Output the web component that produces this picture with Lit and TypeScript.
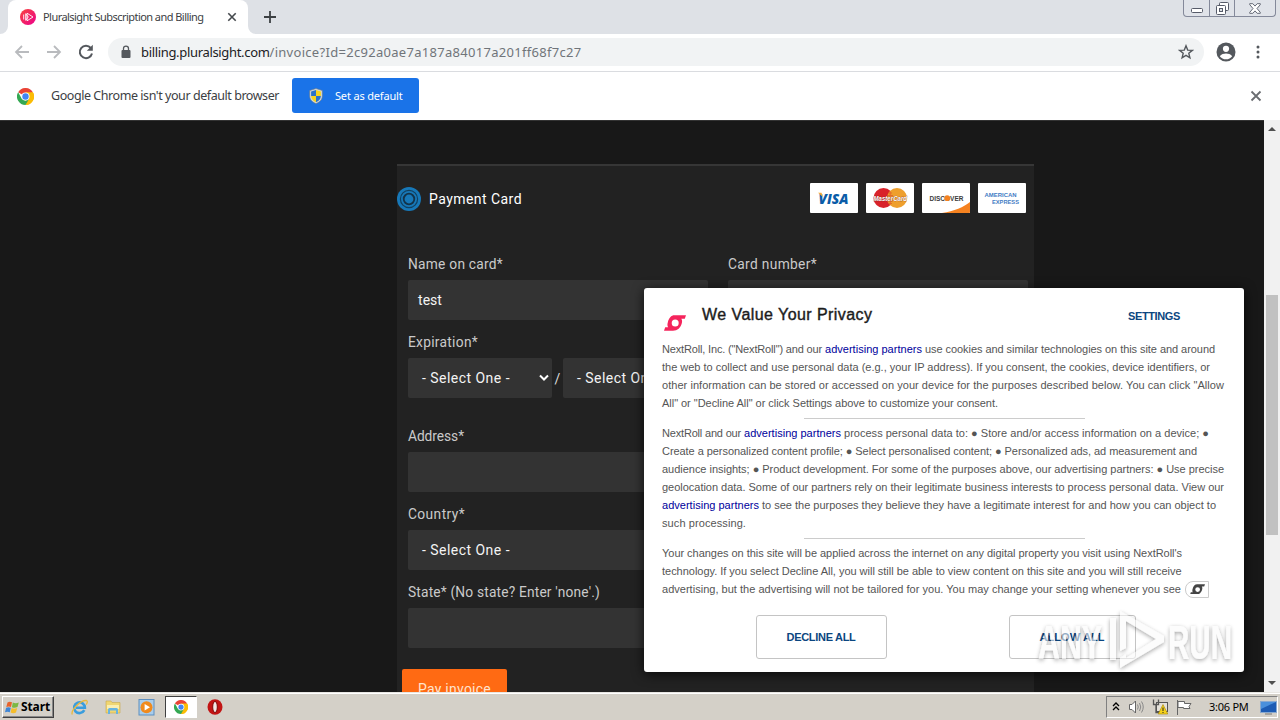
import { LitElement, html, css, svg } from "lit";
import { customElement, property } from "lit/decorators.js";

/** One line of text whose letter spacing is adjusted so it spans `span` pixels. */
@customElement("fit-text")
class FitText extends LitElement {
  @property({ type: Number }) span = 0;
  static styles = css`
    :host { display: inline-block; white-space: nowrap; flex: none; }
  `;
  render() {
    return html`<span><slot></slot></span>`;
  }
  firstUpdated() {
    const el = this.renderRoot.querySelector("span") as HTMLElement;
    const count = (this.textContent || "").trim().replace(/\s+/g, " ").length;
    const natural = el.getBoundingClientRect().width;
    if (count && this.span) {
      this.style.letterSpacing = `${(this.span - natural) / count}px`;
      this.style.width = `${this.span}px`;
    }
  }
}

const chromeLogo = (size: number) => html`<svg width=${size} height=${size} viewBox="0 0 48 48">
  <path fill="#ea4335" d="M24 24 3.2 12A24 24 0 0 1 44.8 12Z"/>
  <path fill="#fbbc05" d="M24 24 44.8 12A24 24 0 0 1 24 48Z"/>
  <path fill="#fbbc05" d="M24 12H44.8A24 24 0 0 1 24 48L34.4 30Z"/>
  <path fill="#34a853" d="M24 48A24 24 0 0 1 3.2 12L13.6 30 24 36 34.4 30Z"/>
  <circle cx="24" cy="24" r="11.5" fill="#fff"/>
  <circle cx="24" cy="24" r="9" fill="#4285f4"/>
</svg>`;

const rollMark = (w: number, color: string) => html`<svg width=${w} height=${(w * 16) / 22} viewBox="0 0 22 16">
  <path fill=${color} fill-rule="evenodd" d="M10.5 0.3H22L20.8 3.8H17.3C18.3 5.2 18.2 6.6 17.8 8.2 16.8 12.6 13.4 15.7 9 15.7H0L1.2 12.2H4.2C3.2 10.9 3.3 9.2 3.8 7.4 4.8 3 7.2 0.3 10.5 0.3ZM11.2 4.6A3.5 3.5 0 1 0 11.2 11.6 3.5 3.5 0 1 0 11.2 4.6Z"/>
</svg>`;

const shield = html`<svg width="16" height="16" viewBox="0 0 16 16">
  <path d="M8 .5 14.3 2.6V8C14.3 11.8 11.5 14.2 8 15.6 4.5 14.2 1.7 11.8 1.7 8V2.6Z" fill="#d5dbe0" stroke="#6d7880" stroke-width=".6"/>
  <path d="M8 2V8H3.1V3.6Z" fill="#2b72c9"/><path d="M8 2V8H12.9V3.6Z" fill="#f7d31e"/>
  <path d="M8 8V14.2C5.4 13.1 3.3 11.2 3.1 8Z" fill="#f7d31e"/><path d="M8 8V14.2C10.6 13.1 12.7 11.2 12.9 8Z" fill="#2b72c9"/>
</svg>`;

@customElement("app-root")
class AppRoot extends LitElement {
  static styles = css`
    :host {
      display: grid; grid-template-rows: 34px 38px 48px 572px 28px;
      width: 1280px; height: 720px; overflow: hidden; position: relative;
      font-family: "Noto Sans", "DejaVu Sans", sans-serif;
    }
    * { box-sizing: border-box; }
    svg { display: block; flex: none; }

    .tabs { background: #dee1e6; display: flex; align-items: stretch; }
    .edge { align-self: flex-end; }
    .tab { width: 240px; background: #fff; border-radius: 8px 8px 0 0; display: flex; align-items: center; padding: 0 11px 0 12px; font-size: 11px; color: #3c4043; }
    .tab fit-text { margin: -1px 0 0 7px; }
    .tab .x { margin-left: auto; }
    .plus { align-self: center; margin-left: 8px; }
    .wincontrols { margin-left: auto; margin-right: 4px; height: 17px; display: flex; border: 1px solid #84899a; border-top: 0; border-radius: 0 0 4px 4px; background: #e0e3e9; }
    .wincontrols div { display: flex; align-items: center; justify-content: center; border-left: 1px solid #84899a; width: 25px; }
    .wincontrols div:first-child { border-left: 0; width: 25px; }
    .wincontrols div:last-child { width: 41px; }

    .toolbar { background: #fff; border-bottom: 1px solid #dadce0; display: flex; align-items: center; padding: 0 0 1px 14px; }
    .toolbar > svg + svg { margin-left: 16px; }
    .omnibox { margin-left: 14px; width: 1096px; height: 28px; border-radius: 14px; background: #f1f3f4; display: flex; align-items: center; padding: 0 10px 0 12px; font-size: 13px; color: #202124; }
    .omnibox .lock { margin-right: 9px; }
    .omnibox fit-text { margin-top: -1px; }
    .omnibox .path { color: #70757a; }
    .omnibox .star { margin-left: auto; }
    .toolbar .avatar { margin-left: 12px; }
    .toolbar .more { margin-left: 19px; }

    .infobar { background: #fff; display: flex; align-items: center; padding: 0 18px 0 17px; color: #3c4043; font-size: 12.5px; }
    .infobar .msg { margin: -1px 0 0 17px; }
    .default { margin: -1px 0 0 13px; width: 127px; height: 35px; border-radius: 3px; background: #1a73e8; color: #fff; display: flex; align-items: center; padding-left: 16px; gap: 11px; font-size: 11px; }
    .default fit-text { margin-top: -1px; }
    .infobar .close { margin-left: auto; }

    .page { background: #181818; display: grid; grid-template-columns: 1264px 16px; overflow: hidden; font-family: Roboto, "Liberation Sans", sans-serif; }
    .body { padding: 44px 0 0 397px; height: 572px; overflow: hidden; box-shadow: inset 0 1px #333; }
    .panel { width: 637px; height: 560px; background: #222; border-top: 2px solid #363636; }
    .method { display: flex; height: 65px; align-items: center; padding-right: 8px; color: #fff; font-size: 14px; }
    .method fit-text { margin: 0 0 0 8px; }
    .cards { margin-left: auto; display: flex; gap: 8px; }
    .card { width: 48px; height: 30px; background: #fff; border-radius: 1px; margin-top: -1px; }
    .cols { display: grid; grid-template-columns: 300px 300px; gap: 20px; padding: 17px 0 0 11px; }
    .label { height: 32px; line-height: 33px; font-size: 13.75px; color: #cacaca; }
    .input { height: 40px; background: #333; border-radius: 2px; color: #f4f4f4; font-size: 14px; display: flex; align-items: center; padding: 0 10px; margin-bottom: 6px; }
    .select { padding: 0 3px 0 14px; justify-content: space-between; }
    .exp { display: flex; color: #ddd; font-size: 14px; margin-bottom: 16px; }
    .exp .input { width: 144px; }
    .exp .slash { width: 11px; text-align: center; line-height: 43px; }
    .pay { margin: 15px 0 0 5px; width: 105px; height: 40px; border-radius: 2px; background: #ff6a13; color: #ffe3cd; font-size: 14px; display: flex; align-items: center; justify-content: center; }

    .scroll { background: #f1f1f1; display: flex; flex-direction: column; align-items: center; }
    .thumb { width: 12px; height: 240px; background: #c1c1c1; margin-top: 164px; }
    .scroll .up { margin-top: 7px; }
    .scroll .down { margin-top: auto; margin-bottom: 7px; }

    .modal { position: absolute; left: 644px; top: 288px; width: 600px; height: 384px; background: #fff; border-radius: 3px; box-shadow: 0 2px 12px rgba(0,0,0,.75); padding: 0 18px; font-family: "Liberation Sans", Arial, sans-serif; font-size: 11px; line-height: 18px; color: #555; }
    .head { height: 52px; display: flex; align-items: flex-start; }
    .head svg { margin: 27px 0 0 2px; }
    .title { margin: 18px 0 0 16px; font-size: 16px; color: #1c1c1c; -webkit-text-stroke: .4px #1c1c1c; }
    .settings { margin: 19px 46px 0 auto; font-weight: bold; color: #0b4680; }
    .para { display: flex; flex-direction: column; align-items: flex-start; }
    .parts { display: flex; }
    .rule { width: 281px; height: 1px; background: #ccc; margin: 6px auto 5px; }
    .last { display: flex; align-items: center; }
    .badge { width: 24px; height: 17px; border: 1px solid #ccc; border-radius: 8px 0 0 8px; margin-left: 4px; display: flex; align-items: center; justify-content: center; }
    .link { color: #00009c; }
    .gap { margin-left: 3px; }
    .actions { display: flex; gap: 122px; padding: 17px 0 0 94px; }
    .btn { height: 44px; width: 131px; border: 1px solid #c4c4c4; border-radius: 3px; display: flex; align-items: center; justify-content: center; font-weight: bold; color: #0b4680; padding-right: 1px; }
    .btn.allow { width: 127px; }
    .watermark { position: absolute; left: 1030px; top: 604px; overflow: visible; }
    .wm { font: bold 48px "Liberation Sans", sans-serif; }

    .taskbar { background: #d4d0c8; border-top: 1px solid #e8e6e2; box-shadow: inset 0 1px #fff; display: flex; align-items: center; padding: 2px 2px 1px; }
    .start { width: 52px; height: 22px; border: 1px solid; border-color: #fff #404040 #404040 #fff; box-shadow: inset -1px -1px #888; display: flex; align-items: center; padding-left: 2px; font-size: 12px; font-weight: bold; color: #000; }
    .start fit-text { margin: -1px 0 0 1px; }
    .launch { display: flex; align-items: center; margin-left: 17px; }
    .launch > * { margin-right: 17px; }
    .launch .active { width: 32px; height: 22px; background: #fff; border: 1px solid; border-color: #404040 #fff #fff #404040; display: flex; align-items: center; justify-content: center; margin: 0 10px 0 -8px; }
    .tray { margin-left: auto; width: 172px; height: 22px; border: 1px solid; border-color: #808080 #fff #fff #808080; display: flex; align-items: center; padding: 0 2px 0 5px; font-size: 11px; color: #000; }
    .tray .clock { margin: -1px 11px 0 16px; }
  `;

  private caret = html`<svg width="10" height="8" viewBox="0 0 10 8"><path d="M1 1.5 5 5.5 9 1.5" fill="none" stroke="#fff" stroke-width="2"/></svg>`;

  render() {
    return html`
      <div class="tabs">
        <svg class="edge" width="8" height="8"><path d="M8 0V8H0A8 8 0 0 0 8 0Z" fill="#fff"/></svg>
        <div class="tab">
          <svg width="16" height="16" viewBox="0 0 16 16">
            <defs><linearGradient id="ps" x1="0" y1="0" x2="1" y2="1"><stop offset="0" stop-color="#f8463c"/><stop offset="1" stop-color="#ec008c"/></linearGradient></defs>
            <circle cx="8" cy="8" r="8" fill="url(#ps)"/>
            <path d="M3.7 5.5V10.5M5.7 4.7V11.3L8.3 8ZM7 4.2 13 8 7 11.8Z" fill="none" stroke="#fff" stroke-width=".9"/>
          </svg>
          <fit-text span="160.5">Pluralsight Subscription and Billing</fit-text>
          <svg class="x" width="10" height="10" viewBox="0 0 10 10"><path d="M1.3 1.3 8.7 8.7M8.7 1.3 1.3 8.7" stroke="#45494d" stroke-width="1.6"/></svg>
        </div>
        <svg class="edge" width="8" height="8"><path d="M0 0V8H8A8 8 0 0 1 0 0Z" fill="#fff"/></svg>
        <svg class="plus" width="12" height="12" viewBox="0 0 12 12"><path d="M6 0V12M0 6H12" stroke="#3c4043" stroke-width="1.8"/></svg>
        <div class="wincontrols">
          <div><svg width="12" height="13" viewBox="0 0 12 13"><rect x=".5" y="6.5" width="11" height="4" rx="1" fill="#fff" stroke="#565b69"/></svg></div>
          <div><svg width="13" height="13" viewBox="0 0 13 13"><rect x="3.5" y=".5" width="9" height="8" rx="1" fill="#fff" stroke="#565b69"/><rect x=".5" y="3.5" width="9" height="9" rx="1" fill="#fff" stroke="#565b69"/><rect x="3.5" y="6.5" width="3" height="3" fill="#dee1e6" stroke="#565b69"/></svg></div>
          <div><svg width="12" height="11" viewBox="0 0 12 11"><path d="M.7.7H3.8L6 3.1 8.2.7H11.3V1.6L8 5.5 11.3 9.4V10.3H8.2L6 7.9 3.8 10.3H.7V9.4L4 5.5.7 1.6Z" fill="#fff" stroke="#565b69" stroke-width=".9"/></svg></div>
        </div>
      </div>

      <div class="toolbar">
        <svg width="16" height="16" viewBox="0 0 16 16"><path d="M15 8H2.5M8 2 2 8 8 14" fill="none" stroke="#b9bbbe" stroke-width="1.8"/></svg>
        <svg width="16" height="16" viewBox="0 0 16 16"><path d="M1 8H13.5M8 2 14 8 8 14" fill="none" stroke="#b9bbbe" stroke-width="1.8"/></svg>
        <svg width="16" height="16" viewBox="0 0 16 16"><path d="M12.8 4A6.2 6.2 0 1 0 14 9.5" fill="none" stroke="#54585d" stroke-width="2"/><path d="M14.8.8V6.8H8.8Z" fill="#54585d"/></svg>
        <div class="omnibox">
          <svg class="lock" width="12" height="14" viewBox="0 0 12 14"><rect x="1.5" y="5" width="9" height="8" rx="1" fill="#54585d"/><path d="M3.5 6V3.6A2.5 2.5 0 0 1 8.5 3.6V6" fill="none" stroke="#54585d" stroke-width="1.3"/></svg>
          <fit-text span="128.5">billing.pluralsight.com</fit-text><fit-text span="312" class="path">/invoice?Id=2c92a0ae7a187a84017a201ff68f7c27</fit-text>
          <svg class="star" width="16" height="16" viewBox="0 0 16 16"><path d="M8 1.8 9.7 6.1 14.3 6.4 10.8 9.3 11.9 13.8 8 11.3 4.1 13.8 5.2 9.3 1.7 6.4 6.3 6.1Z" fill="none" stroke="#54585d" stroke-width="1.4"/></svg>
        </div>
        <svg class="avatar" width="20" height="20" viewBox="0 0 20 20"><circle cx="10" cy="10" r="9.5" fill="#54585d"/><circle cx="10" cy="6.8" r="3.1" fill="#fff"/><path d="M3.8 14.2C5 12 8 11.4 10 11.4S15 12 16.2 14.2C14.8 16.3 12.5 17.3 10 17.3S5.2 16.3 3.8 14.2Z" fill="#fff"/></svg>
        <svg class="more" width="6" height="14" viewBox="0 0 6 14"><circle cx="3" cy="2" r="1.5" fill="#54585d"/><circle cx="3" cy="7" r="1.5" fill="#54585d"/><circle cx="3" cy="12" r="1.5" fill="#54585d"/></svg>
      </div>

      <div class="infobar">
        ${chromeLogo(17)}
        <fit-text class="msg" span="228">Google Chrome isn't your default browser</fit-text>
        <div class="default">${shield}<fit-text span="67.5">Set as default</fit-text></div>
        <svg class="close" width="12" height="12" viewBox="0 0 12 12"><path d="M1.5 1.5 10.5 10.5M10.5 1.5 1.5 10.5" stroke="#6a6d71" stroke-width="1.8"/></svg>
      </div>

      <div class="page">
        <div class="body">
          <div class="panel">
            <div class="method">
              <svg width="24" height="24" viewBox="0 0 24 24"><circle cx="12" cy="12" r="12" fill="#1778b8"/><circle cx="12" cy="12" r="8.6" fill="none" stroke="#12405f" stroke-width="1.2"/><circle cx="12" cy="12" r="5.3" fill="none" stroke="#12334a" stroke-width="1.8"/></svg>
              <fit-text span="93">Payment Card</fit-text>
              <div class="cards">${this.cards()}</div>
            </div>
            <div class="cols">
              <div>
                <div class="label"><fit-text span="95">Name on card*</fit-text></div>
                <div class="input"><fit-text span="24">test</fit-text></div>
                <div class="label"><fit-text span="70">Expiration*</fit-text></div>
                <div class="exp">
                  <div class="input select"><fit-text span="88">- Select One -</fit-text>${this.caret}</div>
                  <div class="slash">/</div>
                  <div class="input select"><fit-text span="88">- Select One -</fit-text>${this.caret}</div>
                </div>
                <div class="label"><fit-text span="56">Address*</fit-text></div>
                <div class="input"></div>
                <div class="label"><fit-text span="57">Country*</fit-text></div>
                <div class="input select"><fit-text span="88">- Select One -</fit-text></div>
                <div class="label"><fit-text span="192">State* (No state? Enter 'none'.)</fit-text></div>
                <div class="input"></div>
              </div>
              <div>
                <div class="label"><fit-text span="89">Card number*</fit-text></div>
                <div class="input"></div>
              </div>
            </div>
            <div class="pay"><fit-text span="73">Pay invoice</fit-text></div>
          </div>
        </div>
        <div class="scroll">
          <svg class="up" width="8" height="4"><path d="M0 4 4 0 8 4Z" fill="#505050"/></svg>
          <div class="thumb"></div>
          <svg class="down" width="8" height="4"><path d="M0 0 4 4 8 0Z" fill="#505050"/></svg>
        </div>
      </div>

      <div class="taskbar">
        <div class="start">
          <svg width="15" height="15" viewBox="0 0 15 15"><path d="M2.5 2.5C4 1.3 5.5 1.5 7 2.3L6 7C4.5 6.2 3 6.2 1.3 7Z" fill="#e8632b"/><path d="M7.8 2.6C9.5 3.4 11.5 3.6 13.8 2.6L12.5 7C10.5 8 8.7 7.9 6.9 7.2Z" fill="#7cb843"/><path d="M1.1 7.8C2.6 7 4.3 7 5.8 7.8L4.8 12.3C3.2 11.5 1.7 11.6 0 12.3Z" fill="#3f86d6"/><path d="M6.6 8C8.5 8.9 10.2 8.9 12.2 8L11 12.6C9 13.5 7.2 13.3 5.6 12.6Z" fill="#f5bd2a"/></svg>
          <fit-text span="29">Start</fit-text>
        </div>
        <div class="launch">
          <svg width="17" height="17" viewBox="0 0 17 17"><path d="M13.3 11.2A5.4 5.4 0 1 1 13.9 8.8H5" fill="none" stroke="#3a9ddd" stroke-width="2.6"/><path d="M1.3 15.5C-.5 12 9 1 15.5 1.5 17 2 16 4.5 15.2 5.5" fill="none" stroke="#e9b93c" stroke-width="1.3"/></svg>
          <svg width="16" height="16" viewBox="0 0 16 16"><path d="M1 2H6L7 3.5H15V14H1Z" fill="#f0d672" stroke="#c9a94b" stroke-width=".6"/><path d="M2 6H14V10H2Z" fill="#fbeeb0"/><path d="M3 15V10.5A1.5 1.5 0 0 1 4.5 9H11.5A1.5 1.5 0 0 1 13 10.5V15H11V11.5H5V15Z" fill="#68b4df"/></svg>
          <svg width="18" height="17" viewBox="0 0 18 17"><rect x="1" y=".5" width="15" height="15.5" fill="#a9cdeb" stroke="#5d8fc0"/><circle cx="8.5" cy="8.2" r="6" fill="#f08a1d"/><path d="M6.6 4.9 12 8.2 6.6 11.5Z" fill="#fff"/></svg>
          <div class="active">${chromeLogo(14)}</div>
          <svg width="16" height="16" viewBox="0 0 16 16"><ellipse cx="8" cy="8" rx="7.5" ry="7.8" fill="#c21414"/><ellipse cx="8" cy="8" rx="2.3" ry="5.6" fill="#f3e9e6" stroke="#7c0808"/></svg>
        </div>
        <div class="tray">
          <svg width="8" height="10" viewBox="0 0 8 10"><path d="M1 4 4 1 7 4M1 8 4 5 7 8" fill="none" stroke="#000" stroke-width="1.3"/></svg>
          <svg width="24" height="16" viewBox="0 0 24 16"><path d="M9.5 5.5H12L15.5 2V14L12 10.5H9.5Z" fill="#fff" stroke="#666"/><path d="M17.5 5.5Q19 8 17.5 10.5M19.5 4Q22 8 19.5 12M21.5 2.5Q25 8 21.5 13.5" fill="none" stroke="#888"/></svg>
          <svg width="24" height="18" viewBox="0 0 24 18"><rect x="12.5" y="4.5" width="11" height="9" fill="#e4e1da" stroke="#555"/><path d="M9.5 1.5V6.5H14.5V1.5M12 6.5V14.5H15" fill="none" stroke="#555" stroke-width="1.3"/><path d="M19 6.5 23.8 16H14.2Z" fill="#f5d21c" stroke="#a68500" stroke-width=".6"/><path d="M19 9.5V13M19 14V15" stroke="#222"/></svg>
          <svg width="25" height="17" viewBox="0 0 25 17"><path d="M9.5 1V16M10 2.5H16.5V4.5H23L21 7.5 22 9.5H15.5V8.5H10Z" fill="#fff" stroke="#666"/></svg>
          <fit-text class="clock" span="39.5">3:06 PM</fit-text>
          <svg width="17" height="15" viewBox="0 0 17 15"><rect x=".5" y="1.5" width="16" height="11" fill="#1d5cb4" stroke="#89a9cf"/><path d="M1 2H16L1 9Z" fill="#4a90dc"/><path d="M5 14H12" stroke="#777"/></svg>
        </div>
      </div>

      <div class="modal">
        <div class="head">
          ${rollMark(22, "#f5245c")}
          <fit-text class="title" span="170.5">We Value Your Privacy</fit-text>
          <fit-text class="settings" span="52">SETTINGS</fit-text>
        </div>
        <div class="para">
          <div class="parts"><fit-text span="160">NextRoll, Inc. ("NextRoll") and our</fit-text><fit-text class="link gap" span="97">advertising partners</fit-text><fit-text class="gap" span="290">use cookies and similar technologies on this site and around</fit-text></div>
          <fit-text span="548">the web to collect and use personal data (e.g., your IP address). If you consent, the cookies, device identifiers, or</fit-text>
          <fit-text span="562">other information can be stored or accessed on your device for the purposes described below. You can click "Allow</fit-text>
          <fit-text span="336">All" or "Decline All" or click Settings above to customize your consent.</fit-text>
        </div>
        <div class="rule"></div>
        <div class="para">
          <div class="parts"><fit-text span="79">NextRoll and our</fit-text><fit-text class="link gap" span="97">advertising partners</fit-text><fit-text class="gap" span="365">process personal data to: ● Store and/or access information on a device; ●</fit-text></div>
          <fit-text span="535">Create a personalized content profile; ● Select personalised content; ● Personalized ads, ad measurement and</fit-text>
          <fit-text span="562">audience insights; ● Product development. For some of the purposes above, our advertising partners: ● Use precise</fit-text>
          <fit-text span="562">geolocation data. Some of our partners rely on their legitimate business interests to process personal data. View our</fit-text>
          <div class="parts"><fit-text class="link" span="97">advertising partners</fit-text><fit-text class="gap" span="454">to see the purposes they believe they have a legitimate interest for and how you can object to</fit-text></div>
          <fit-text span="84">such processing.</fit-text>
        </div>
        <div class="rule"></div>
        <div class="para">
          <fit-text span="520">Your changes on this site will be applied across the internet on any digital property you visit using NextRoll's</fit-text>
          <fit-text span="519.5">technology. If you select Decline All, you will still be able to view content on this site and you will still receive</fit-text>
          <div class="last"><fit-text span="519">advertising, but the advertising will not be tailored for you. You may change your setting whenever you see</fit-text><div class="badge">${rollMark(15, "#444")}</div></div>
        </div>
        <div class="actions">
          <div class="btn"><fit-text span="69">DECLINE ALL</fit-text></div>
          <div class="btn allow"><fit-text span="65">ALLOW ALL</fit-text></div>
        </div>
      </div>

      <svg class="watermark" width="215" height="74" viewBox="0 0 215 74">
        <defs><filter id="sh" x="-10%" y="-20%" width="120%" height="150%"><feDropShadow dx="0" dy="1.5" stdDeviation="2" flood-color="#000" flood-opacity=".6"/></filter></defs>
        <g filter="url(#sh)" opacity=".58" fill="#fafafa">
          <text class="wm" x="8" y="55" textLength="64" lengthAdjust="spacingAndGlyphs">ANY</text>
          <text class="wm" x="138" y="55" textLength="64" lengthAdjust="spacingAndGlyphs">RUN</text>
          <path fill-rule="evenodd" d="M90 7 134 32V38L90 64V54L96 50V54L126 35 96 17V44L90 47Z"/>
          <path d="M80 14H86V56H80Z"/>
        </g>
      </svg>
    `;
  }

  private cards() {
    const brand = (body: unknown) => html`<svg class="card" viewBox="0 0 48 30">${body}</svg>`;
    return [
      brand(svg`<text x="8.5" y="20.5" font-family="Open Sans" font-weight="800" font-style="italic" font-size="14.5" textLength="30" lengthAdjust="spacingAndGlyphs" fill="#0a5ca8">VISA</text><path d="M8 9.8H11.5L13 14Z" fill="#f3a833"/>`),
      brand(svg`<circle cx="17.5" cy="15" r="10" fill="#d9222a"/><circle cx="31" cy="15" r="10" fill="#ee9f2d"/><path d="M24.2 8.5V21.5M22.5 10H26M21.5 12.5H27M21.5 18H27M22.5 20.5H26" stroke="#e46a2c"/><text x="7.5" y="18" font-family="Liberation Sans" font-weight="bold" font-style="italic" font-size="7.5" textLength="33.5" lengthAdjust="spacingAndGlyphs" fill="#fff" stroke="#7a2a1a" stroke-width=".5" paint-order="stroke">MasterCard</text>`),
      brand(svg`<path d="M20 30C32 28 42 24 48 19V30Z" fill="#f58220"/><text x="7.5" y="17.8" font-family="Liberation Sans" font-weight="bold" font-size="7.5" textLength="34" lengthAdjust="spacingAndGlyphs" fill="#3c3c3c">DISCOVER</text><circle cx="25.2" cy="15.2" r="2.9" fill="#f58220"/>`),
      brand(svg`<g fill="#3f7cc4" font-family="Liberation Sans" font-weight="bold" font-size="6"><text x="6.5" y="13.5" textLength="32" lengthAdjust="spacingAndGlyphs">AMERICAN</text><text x="14" y="21" textLength="27" lengthAdjust="spacingAndGlyphs">EXPRESS</text></g>`),
    ];
  }
}
